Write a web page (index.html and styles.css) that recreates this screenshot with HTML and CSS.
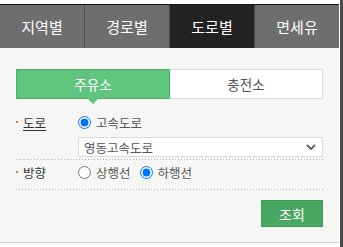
FILE: index.html
```html
<!DOCTYPE html>
<html lang="ko">
  <head>
    <meta charset="UTF-8" />
    <meta name="viewport" content="width=device-width, initial-scale=1.0" />
    <title>주유소 찾기</title>
    <link rel="stylesheet" href="styles.css">
  </head>
  <body>
    <div class="page">
      <div class="panel">
        <div class="tabs">
          <a href="#">지역별</a>
          <a href="#">경로별</a>
          <a href="#" class="active">도로별</a>
          <a href="#">면세유</a>
        </div>

        <div class="content">
          <div class="type-tabs">
            <a href="#" class="on">주유소</a>
            <a href="#">충전소</a>
          </div>

          <div class="field first">
            <div class="label"><span class="dot"></span><u>도로</u></div>
            <div class="control">
              <label class="radio"><input type="radio" name="road" checked /> 고속도로</label>
              <div class="select-box">
                <span>영동고속도로</span>
                <svg width="10" height="6" viewBox="0 0 10 6"><path d="M1 1 L5 5 L9 1" fill="none" stroke="#666" stroke-width="2"/></svg>
              </div>
            </div>
          </div>

          <div class="field">
            <div class="label"><span class="dot"></span>방향</div>
            <div class="control row">
              <label class="radio"><input type="radio" name="dir" /> 상행선</label>
              <label class="radio"><input type="radio" name="dir" checked /> 하행선</label>
            </div>
          </div>

          <div class="actions">
            <button class="search-btn">조회</button>
          </div>
        </div>
      </div>
      <div class="edge"></div>
    </div>
  </body>
</html>
```

FILE: styles.css
```css
body {
  margin: 0;
  padding: 0;
  background-color: #fff;
  font-family: "Noto Sans CJK KR", "Noto Sans", sans-serif;
}

.page {
  display: flex;
  height: 247px;
}

.panel {
  width: 339px;
  margin-top: 4px;
  border-top: 1px solid #111;
  background-color: #f6f6f4;
  align-self: flex-start;
}

.edge {
  width: 3px;
  margin-left: 1px;
  background-color: #4a4a4a;
}

.tabs {
  display: flex;
  height: 43px;
  background-color: #6e6e6e;
}

.tabs a {
  width: 84px;
  display: flex;
  align-items: center;
  justify-content: center;
  color: #fff;
  font-size: 15px;
  text-decoration: none;
}

.tabs a + a {
  border-left: 1px solid #4c4c4c;
}

.tabs a.active {
  background-color: #222;
}

.content {
  padding: 21px 16px 15px 16px;
  border-bottom: 1px solid #cfcfcf;
}

.type-tabs {
  display: flex;
  height: 30px;
}

.type-tabs a {
  flex: 1;
  display: flex;
  align-items: center;
  justify-content: center;
  background-color: #fff;
  border: 1px solid #dcdcdc;
  border-left: none;
  color: #555;
  font-size: 13.5px;
  text-decoration: none;
  position: relative;
}

.type-tabs a.on {
  background-color: #5fc47d;
  border: 1px solid #4aad68;
  color: #fff;
}

.type-tabs a.on::after {
  content: "";
  position: absolute;
  left: 50%;
  bottom: -6px;
  margin-left: -6px;
  border-left: 6px solid transparent;
  border-right: 6px solid transparent;
  border-top: 6px solid #5fc47d;
}

/* 점선 구분선 */
.field {
  display: flex;
  padding: 3px 0 9px 0;
  font-size: 12.5px;
  background-image: linear-gradient(to right, #b0b0b0 1px, transparent 1px);
  background-size: 3px 1px;
  background-repeat: repeat-x;
  background-position: left bottom;
}

.field.first {
  padding: 14px 0 3px 0;
}

.label {
  width: 62px;
  height: 18px;
  display: flex;
  align-items: center;
  color: #333;
}

.dot {
  width: 2px;
  height: 2px;
  background-color: #f08020;
  margin-right: 5px;
}

.label u {
  text-underline-offset: 2px;
}

.control {
  flex: 1;
}

.control.row {
  display: flex;
  gap: 9px;
}

.radio {
  display: flex;
  align-items: center;
  height: 18px;
  color: #555;
}

.radio input {
  width: 13px;
  height: 13px;
  margin: 0 5px 0 0;
}

.select-box {
  margin-top: 6px;
  height: 18px;
  border: 1px solid #dcdcdc;
  background-color: #fff;
  display: flex;
  align-items: center;
  justify-content: space-between;
  padding: 0 6px 0 5px;
  color: #555;
}

.actions {
  display: flex;
  justify-content: flex-end;
  margin-top: 10px;
}

.search-btn {
  width: 62px;
  height: 27px;
  background-color: #48a862;
  border: 1px solid #3a9954;
  color: #fff;
  font-family: inherit;
  font-size: 14px;
  padding: 0;
}
```
